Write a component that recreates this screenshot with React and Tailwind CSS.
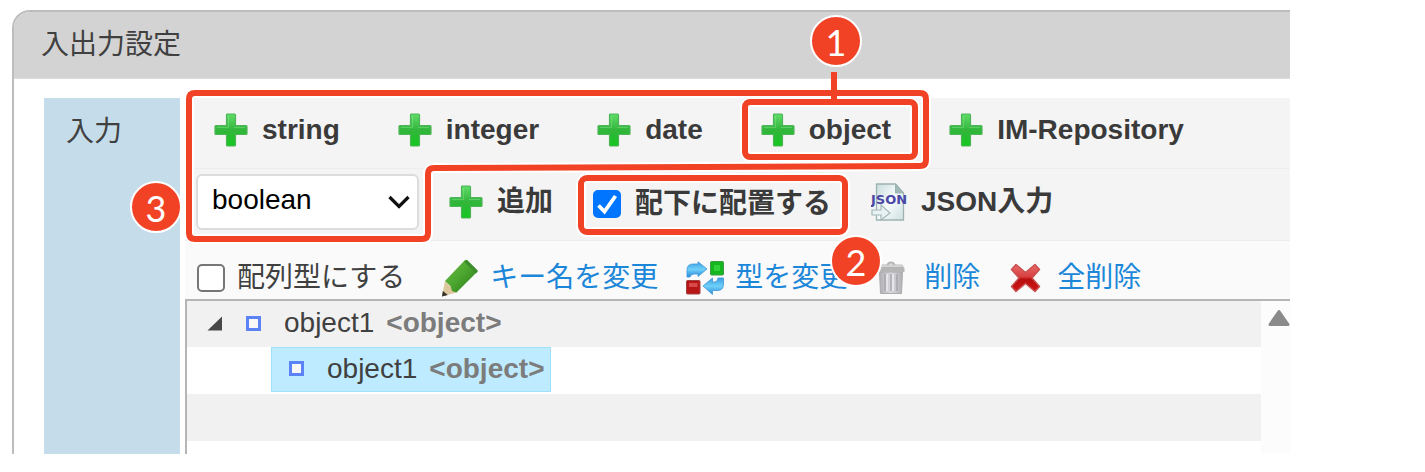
import { useState } from 'react';

const typeButtons = ['string', 'integer', 'date', 'object', 'IM-Repository'];

function PlusIcon() {
  return (
    <svg className="w-[34px] h-[34px] shrink-0" viewBox="0 0 34 34" aria-hidden="true">
      <defs>
        <linearGradient id="plus" x1="0" y1="0" x2="0" y2="1">
          <stop offset="0" stopColor="#5fdc68" />
          <stop offset="0.5" stopColor="#33b53c" />
          <stop offset="1" stopColor="#14c71e" />
        </linearGradient>
      </defs>
      <path
        d="M13.5 1h7q1 0 1 1v10.500h10.500q1 0 1 1v7q0 1-1 1H21.500V32q0 1-1 1h-7q-1 0-1-1V21.500H2q-1 0-1-1v-7q0-1 1-1h10.500V2q0-1 1-1z"
        fill="url(#plus)"
        stroke="#4fb458"
        strokeWidth="1.200"
      />
      <path d="M14.500 3v11.500H3M31 14.500H20" fill="none" stroke="#8be892" strokeWidth="1" opacity="0.400" />
    </svg>
  );
}

function JsonIcon() {
  return (
    <svg className="w-[38px] h-[38px] shrink-0" viewBox="0 0 38 38" aria-hidden="true">
      <defs>
        <linearGradient id="sheet" x1="0" y1="0" x2="1" y2="1">
          <stop offset="0" stopColor="#c9dcdc" />
          <stop offset="0.5" stopColor="#f7fbfb" />
          <stop offset="1" stopColor="#cfe0e0" />
        </linearGradient>
      </defs>
      <path d="M5.500 1h19l8 9v27h-27z" fill="url(#sheet)" stroke="#9db3b3" strokeWidth="1.300" />
      <path d="M24.500 1v9h8z" fill="#9fb9b9" stroke="#9db3b3" />
      <path d="M1 27h9v-5l9 8-9 7v-5H1z" fill="#e9f2f2" stroke="#a3b8b8" strokeWidth="1.200" />
      <text x="0" y="21" fontFamily="DejaVu Sans" fontSize="13" fontWeight="bold" fill="#4a47a6">JSON</text>
    </svg>
  );
}

function PencilIcon() {
  return (
    <svg className="w-[38px] h-[38px] shrink-0" viewBox="0 0 38 38" aria-hidden="true">
      <defs>
        <linearGradient id="pencil" x1="0" y1="0" x2="1" y2="1">
          <stop offset="0" stopColor="#6fbf45" />
          <stop offset="0.500" stopColor="#4ba52e" />
          <stop offset="1" stopColor="#27761a" />
        </linearGradient>
      </defs>
      <path d="M4 22L1 37.500 15.500 33.500z" fill="#ddc79d" />
      <path d="M1.800 32L1 37.500l5.800-1.500z" fill="#35302a" />
      <path d="M4 22L23.500 1.500q1.500-1.500 3 0l9 9q1.500 1.500 0 3L15.500 33.500 11 32l-1.500-5z" fill="url(#pencil)" />
      <path d="M23 2.500l3-1.500 11 11-2 2.500z" fill="#3d8d2c" />
    </svg>
  );
}

function SwapIcon() {
  return (
    <svg className="w-[38px] h-[34px] shrink-0" viewBox="0 0 38 34" aria-hidden="true">
      <defs>
        <linearGradient id="arrow" x1="0" y1="0" x2="0" y2="1">
          <stop offset="0" stopColor="#3d9ee0" />
          <stop offset="0.500" stopColor="#6fd0fa" />
          <stop offset="1" stopColor="#2b8ad6" />
        </linearGradient>
      </defs>
      <path d="M1 16V9q0-6 6-6h5V0.800L21 8 12 15.500V13H8q-3 0-4 3z" fill="url(#arrow)" stroke="#3d97dc" strokeWidth="0.800" />
      <path d="M37.500 17v6q0 6.500-6 6.500h-5v4l-9.500-8.500L26.500 17v4h2q3 0 3.500-4z" fill="url(#arrow)" stroke="#3d97dc" strokeWidth="0.800" />
      <rect x="24.500" y="0.500" width="13" height="13.500" rx="1" fill="#14b81e" stroke="#3f9a44" />
      <rect x="28" y="4" width="6" height="6" fill="#2fd038" />
      <rect x="0.500" y="19.500" width="13.500" height="13.500" rx="1" fill="#b81616" stroke="#a04040" />
      <rect x="3" y="22" width="8.500" height="4" fill="#d84a4a" />
    </svg>
  );
}

function TrashIcon() {
  return (
    <svg className="w-[38px] h-[34px] shrink-0" viewBox="0 0 38 34" aria-hidden="true">
      <defs>
        <linearGradient id="trash" x1="0" y1="0" x2="1" y2="0">
          <stop offset="0" stopColor="#b0b0b4" />
          <stop offset="0.500" stopColor="#d9d9de" />
          <stop offset="1" stopColor="#b0b0b4" />
        </linearGradient>
      </defs>
      <path d="M12.500 4q1-2.500 3.500-2.500t3.500 2.500" fill="none" stroke="#b5b5b5" strokeWidth="2" />
      <path d="M4.500 11h23l-1 21.500H5.500z" fill="url(#trash)" stroke="#acacb0" />
      <path d="M10 13v17M16 13v17M22 13v17" stroke="#a6a6ae" strokeWidth="1.500" />
      <path d="M12 13v17M18 13v17" stroke="#ededf0" strokeWidth="1.500" />
      <path d="M5 3.500h22l2.500 4v3.500H2.500V7.500z" fill="#b5b5b5" />
      <path d="M5 5h22" stroke="#d2d2d2" strokeWidth="2" />
    </svg>
  );
}

function CrossIcon() {
  return (
    <svg className="w-[38px] h-[30px] shrink-0" viewBox="0 0 38 30" aria-hidden="true">
      <defs>
        <linearGradient id="cross" x1="0" y1="0" x2="0" y2="1">
          <stop offset="0" stopColor="#e86a6a" />
          <stop offset="0.450" stopColor="#d84040" />
          <stop offset="0.550" stopColor="#b80e0e" />
          <stop offset="1" stopColor="#cf1717" />
        </linearGradient>
      </defs>
      <path
        d="M8 1.500l9.500 8 9.500-8 4.500 5-7.500 8.500 7.500 8.500-4.500 5-9.500-8-9.500 8-4.500-5 7.500-8.500L3.500 6.500z"
        fill="url(#cross)"
        stroke="#c85050"
        strokeWidth="1.500"
        strokeLinejoin="round"
      />
    </svg>
  );
}

function CheckBox({ checked, onChange }) {
  return (
    <span className="grid w-7 h-7 shrink-0">
      <input
        type="checkbox"
        checked={checked}
        onChange={(e) => onChange(e.target.checked)}
        className="peer appearance-none col-start-1 row-start-1 w-7 h-7 rounded-[5px] border-2 border-[#767676] bg-white checked:bg-[#0075ff] checked:border-[#0075ff]"
      />
      <svg
        className="col-start-1 row-start-1 w-7 h-7 pointer-events-none invisible peer-checked:visible"
        viewBox="0 0 28 28"
        aria-hidden="true"
      >
        <path d="M5.500 15.500l6 6L22.500 6" fill="none" stroke="#fff" strokeWidth="3.800" />
      </svg>
    </span>
  );
}

function ToolLink({ icon, children }) {
  return (
    <a href="#" className="flex items-center gap-[11px] text-[#1c87d9]">
      {icon}
      {children}
    </a>
  );
}

function NodeLabel({ name, type }) {
  return (
    <>
      <span className="w-[15px] h-[15px] shrink-0 border-[3px] border-[#5b83f5] bg-[#f7f7f7]" />
      <span className="ml-[23px]">{name}</span>
      <b className="ml-3 text-[#7c7c7c]">&lt;{type}&gt;</b>
    </>
  );
}

function Badge({ className, children }) {
  return (
    <span
      className={`absolute flex items-center justify-center w-[52px] h-[52px] pt-0.5 rounded-full border-2 border-white bg-[#f24225] font-[family-name:Lato,sans-serif] text-[36px] leading-none text-white ${className}`}
    >
      {children}
    </span>
  );
}

// Red outlines and numbers that float over the panel
function Callouts() {
  const outline = 'M195 93H920q6 0 6 6V160q0 6-6 6L434 168q-6 0-6 6V233q0 6-6 6H195q-6 0-6-6V99q0-6 6-6z';

  return (
    <div className="absolute inset-0 pointer-events-none">
      <svg className="absolute left-0 top-0 w-[1000px] h-[300px]" viewBox="0 0 1000 300" fill="none" aria-hidden="true">
        <path d={outline} stroke="#fff" strokeWidth="10" />
        <path d={outline} stroke="#f24225" strokeWidth="6" />
        <rect x="745" y="102" width="170" height="55" rx="5" stroke="#fff" strokeWidth="10" />
        <rect x="581" y="178" width="264" height="54" rx="6" stroke="#fff" strokeWidth="10" />
        <rect x="745" y="102" width="170" height="55" rx="5" stroke="#f24225" strokeWidth="6" />
        <rect x="581" y="178" width="264" height="54" rx="6" stroke="#f24225" strokeWidth="6" />
        <path d="M834 72v29" stroke="#f24225" strokeWidth="6" />
      </svg>
      <Badge className="left-[810px] top-[15px]">1</Badge>
      <Badge className="left-[830px] top-[235px]">2</Badge>
      <Badge className="left-[130px] top-[181px]">3</Badge>
    </div>
  );
}

export default function App() {
  const [type, setType] = useState('boolean');
  const [nest, setNest] = useState(true);
  const [asArray, setAsArray] = useState(false);

  return (
    <div className="relative bg-white pt-2.5 pl-3 pr-[135px] pb-[18px] font-['Liberation_Sans','Noto_Sans_CJK_JP',sans-serif] text-[28px] leading-10 text-[#404040] whitespace-nowrap">
      <section className="rounded-tl-[18px] border-l-2 border-t-2 border-[#bdbdbd] overflow-hidden">
        <h1 className="h-[67px] pl-[27px] flex items-center bg-[#d3d3d3] border-b border-[#dcdcdc]">入出力設定</h1>

        <div className="flex gap-[5px] pl-[30px] pt-[19px]">
          <div className="w-[136px] shrink-0 bg-[#c5dcea] px-[22px] pt-3.5">入力</div>

          <div className="flex-1 min-w-0">
            {/* Add by type */}
            <div className="h-[71px] pb-1.5 flex items-center bg-[#f4f4f4] border-b border-[#ededed] font-bold text-[#3a3a3a]">
              {typeButtons.map((label) => (
                <button key={label} type="button" className="flex items-center gap-3.5 px-[29px]">
                  <PlusIcon />
                  {label}
                </button>
              ))}
            </div>

            {/* Add from list */}
            <div className="h-[72px] pl-[11px] pb-1.5 flex items-center bg-[#f4f4f4] border-b border-[#ededed] font-bold text-[#3a3a3a]">
              <span className="grid items-center w-[223px] shrink-0">
                <select
                  aria-label="type"
                  value={type}
                  onChange={(e) => setType(e.target.value)}
                  className="appearance-none col-start-1 row-start-1 w-full h-14 pl-3.5 pb-1 rounded-md border-2 border-[#dcdcdc] bg-white font-normal text-black"
                >
                  <option>boolean</option>
                  <option>string</option>
                  <option>integer</option>
                </select>
                <svg className="col-start-1 row-start-1 justify-self-end mr-2 w-6 h-4 pointer-events-none" viewBox="0 0 24 16" aria-hidden="true">
                  <path d="M2.500 3L12 12.500 21.500 3" fill="none" stroke="#111" strokeWidth="3.200" />
                </svg>
              </span>
              <button type="button" className="flex items-center gap-3.5 px-[30px]">
                <PlusIcon />
                追加
              </button>
              <label className="flex items-center gap-3.5 pl-2.5 pt-1">
                <CheckBox checked={nest} onChange={setNest} />
                配下に配置する
              </label>
              <button type="button" className="flex items-center gap-3 pl-10">
                <JsonIcon />
                JSON入力
              </button>
            </div>

            {/* Edit tools */}
            <div className="h-[58px] pl-3 pt-4 flex items-center bg-[#fafafa] gap-7">
              <label className="flex items-center gap-3 mr-2">
                <CheckBox checked={asArray} onChange={setAsArray} />
                配列型にする
              </label>
              <ToolLink icon={<PencilIcon />}>キー名を変更</ToolLink>
              <ToolLink icon={<SwapIcon />}>型を変更</ToolLink>
              <ToolLink icon={<TrashIcon />}>削除</ToolLink>
              <ToolLink icon={<CrossIcon />}>全削除</ToolLink>
            </div>

            {/* Tree */}
            <div className="flex border-l-2 border-t-2 border-[#b5b5b5]">
              <ul className="flex-1">
                <li className="h-[46px] pl-5 pb-0.5 flex items-center bg-[#f1f1f1]">
                  <svg className="w-4 h-[15px] mr-[23px]" viewBox="0 0 16 15" aria-hidden="true">
                    <path d="M15 0.500V14.500H0.500z" fill="#484848" />
                  </svg>
                  <NodeLabel name="object1" type="object" />
                </li>
                <li className="h-[47px] pl-[84px] flex items-start">
                  <span className="h-[45px] px-[17px] pr-1.5 pb-0.5 flex items-center border border-[#9fe0fb] bg-[#beebff]">
                    <NodeLabel name="object1" type="object" />
                  </span>
                </li>
                <li className="h-[47px] bg-[#f1f1f1]" />
                <li className="h-[13px]" />
              </ul>
              <div className="w-[29px] pt-2 flex flex-col items-end bg-[#fcfcfc]">
                <button type="button" aria-label="scroll up">
                  <svg className="w-[22px] h-[18px]" viewBox="0 0 22 18" aria-hidden="true">
                    <path d="M11 2.500L20 15.500H2z" fill="#8a8a8a" stroke="#8a8a8a" strokeWidth="3" strokeLinejoin="round" />
                  </svg>
                </button>
              </div>
            </div>
          </div>
        </div>
      </section>

      <Callouts />
    </div>
  );
}
